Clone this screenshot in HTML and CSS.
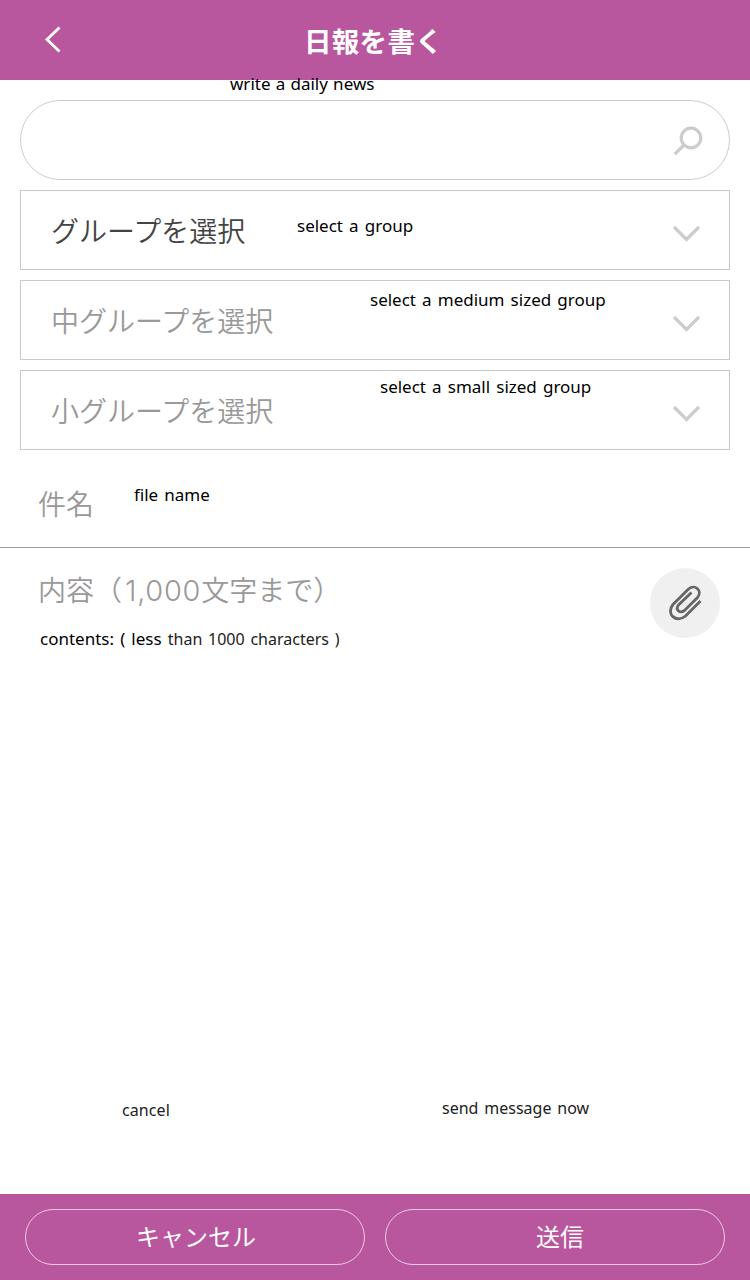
FILE: index.html
```html
<!DOCTYPE html>
<html lang="ja">
<head>
<meta charset="utf-8">
<title>日報を書く</title>
<link rel="stylesheet" href="styles.css">
</head>
<body>
<div class="screen">
  <header class="header">
    <svg class="back" width="20" height="30" viewBox="0 0 20 30"><path d="M15.5 3.500 3 15.500 15.5 27.500" /></svg>
    <h1 class="title">日報を書く</h1>
  </header>
  <main class="main">
    <div class="fields">
      <div class="search">
        <svg class="search-icon" width="32" height="32" viewBox="0 0 32 32"><circle cx="19" cy="12" r="9.800"/><path d="M12 19 2.700 28.200"/></svg>
      </div>
      <div class="select active"><span class="label">グループを選択</span><svg class="chevron" width="28" height="18" viewBox="0 0 28 18"><path d="M2 2 14.500 14.500 27 2"/></svg></div>
      <div class="select"><span class="label">中グループを選択</span><svg class="chevron" width="28" height="18" viewBox="0 0 28 18"><path d="M2 2 14.500 14.500 27 2"/></svg></div>
      <div class="select"><span class="label">小グループを選択</span><svg class="chevron" width="28" height="18" viewBox="0 0 28 18"><path d="M2 2 14.500 14.500 27 2"/></svg></div>
    </div>
    <div class="subject"><span class="label">件名</span></div>
    <div class="content">
      <span class="label">内容（<span class="digits">1,000</span>文字まで）</span>
      <div class="attach">
        <svg width="40" height="40" viewBox="0 0 40 40"><path d="M35.500 18 20.500 33C11 41 .5 30.500 8 21.500L23.500 6C30 .5 38 8 32.500 14.500L19.500 27.500C14.500 31 10 26.500 13.500 22L26.500 9.500"/></svg>
      </div>
    </div>
  </main>
  <footer class="footer">
    <div class="button"><span>キャンセル</span></div>
    <div class="button send"><span>送信</span></div>
  </footer>
  <span class="note note-title">write a daily news</span>
  <span class="note note-group">select a group</span>
  <span class="note note-medium">select a medium sized group</span>
  <span class="note note-small">select a small sized group</span>
  <span class="note note-file">file name</span>
  <span class="note note-contents">contents: ( less <span class="thin">than 1000 characters )</span></span>
  <span class="note note-cancel">cancel</span>
  <span class="note note-send">send message now</span>
</div>
</body>
</html>
```
FILE: styles.css
```css
* { box-sizing: border-box; }
body { margin: 0; background: #fff; font-family: "Noto Sans CJK JP", sans-serif; }
svg { display: block; fill: none; }
.screen { position: relative; width: 750px; height: 1280px; display: flex; flex-direction: column; overflow: hidden; }
.header { height: 80px; background: #b8569e; color: #fff; display: grid; grid-template-columns: 64px 1fr 64px; align-items: center; }
.back { justify-self: end; stroke: #fff; stroke-width: 2.8; margin-bottom: 3px; }
.title { margin: 0 0 0 -3px; text-align: center; font-size: 27.5px; letter-spacing: .3px; line-height: 40px; font-weight: 700; }
.main { flex: 1; display: flex; flex-direction: column; }
.fields { padding: 20px 20px 0; display: flex; flex-direction: column; gap: 10px; }
.search { height: 80px; border: 1px solid #ccc; border-radius: 40px; display: flex; align-items: center; justify-content: flex-end; padding: 4px 25px 0 0; }
.search-icon { stroke: #ccc; stroke-width: 3.2; }
.select { height: 80px; border: 1px solid #c8c8ca; display: flex; align-items: center; justify-content: space-between; padding: 0 29px 0 30px; }
.label { font-size: 28px; line-height: 38px; color: #999; font-weight: 350; white-space: nowrap; }
.active .label { color: #444; }
.chevron { stroke: #ccc; stroke-width: 3.2; margin-top: 8px; }
.subject { height: 98px; border-bottom: 1px solid #999; padding: 34px 38px 0; }
.content { display: flex; justify-content: space-between; padding: 20px 30px 0 38px; }
.content .label { padding-top: 2px; }
.digits { font-family: Inter, sans-serif; font-weight: 300; font-size: 29px; letter-spacing: .7px; margin-left: 3px; }
.attach { width: 70px; height: 70px; border-radius: 50%; background: #f0f0f0; display: flex; align-items: center; justify-content: center; }
.attach svg { stroke: #666; stroke-width: 2.8; }
.footer { height: 86px; background: #b8569e; padding: 15px 25px; display: flex; gap: 20px; }
.button { flex: none; width: 340px; height: 56px; border: 1px solid #f0cbe5; border-radius: 28px; color: #fff; font-size: 24px; line-height: 51px; text-align: center; padding-left: 2px; }
.send { padding-left: 10px; }
.note { position: absolute; font-family: "Noto Sans", sans-serif; font-size: 17px; line-height: 24px; color: #000; white-space: nowrap; word-spacing: 1.7px; }
.note-title { left: 230px; top: 72px; word-spacing: .8px; }
.note-group { left: 297px; top: 214px; }
.note-medium { left: 370px; top: 288px; }
.note-small { left: 380px; top: 375px; }
.note-file { left: 134px; top: 483px; }
.note-contents { left: 40px; top: 627px; }
.note-cancel { left: 122px; top: 1098px; letter-spacing: .1px; }
.note-send { left: 442px; top: 1096px; }
.thin, .note-cancel, .note-send { font-size: 16px; color: #222; }
.thin { word-spacing: 1.6px; }
```
